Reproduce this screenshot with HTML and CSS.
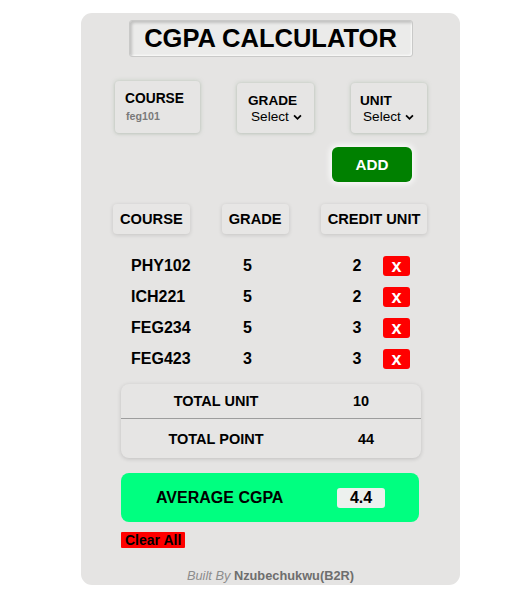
FILE: index.html
```html
<!DOCTYPE html>
<html>
<head>
<meta charset="utf-8">
<link rel="stylesheet" href="styles.css">
</head>
<body>
<div class="card">
  <div class="title-wrap"><h1 class="title">CGPA CALCULATOR</h1></div>

  <div class="inputs">
    <div class="field field-course">
      <span class="field-label">COURSE</span>
      <span class="field-input">feg101</span>
    </div>
    <div class="field field-grade">
      <span class="field-label small">GRADE</span>
      <span class="field-select">Select <svg class="chev" viewBox="0 0 10 7" width="9" height="7"><path d="M1.2 1.2 L5 5 L8.8 1.2" fill="none" stroke="#000" stroke-width="2"/></svg></span>
    </div>
    <div class="field field-unit">
      <span class="field-label small">UNIT</span>
      <span class="field-select">Select <svg class="chev" viewBox="0 0 10 7" width="9" height="7"><path d="M1.2 1.2 L5 5 L8.8 1.2" fill="none" stroke="#000" stroke-width="2"/></svg></span>
    </div>
  </div>

  <div class="add-row"><button class="add-btn">ADD</button></div>

  <div class="heads">
    <div class="head">COURSE</div>
    <div class="head">GRADE</div>
    <div class="head">CREDIT UNIT</div>
  </div>

  <div class="rows">
    <div class="row"><span class="c-course">PHY102</span><span class="c-grade">5</span><span class="c-unit">2</span><button class="x-btn">x</button></div>
    <div class="row"><span class="c-course">ICH221</span><span class="c-grade">5</span><span class="c-unit">2</span><button class="x-btn">x</button></div>
    <div class="row"><span class="c-course">FEG234</span><span class="c-grade">5</span><span class="c-unit">3</span><button class="x-btn">x</button></div>
    <div class="row"><span class="c-course">FEG423</span><span class="c-grade">3</span><span class="c-unit">3</span><button class="x-btn">x</button></div>
  </div>

  <div class="totals">
    <div class="t-row t-first"><span class="t-label">TOTAL UNIT</span><span class="t-val">10</span></div>
    <div class="t-row"><span class="t-label">TOTAL POINT</span><span class="t-val t-val2">44</span></div>
  </div>

  <div class="average">
    <span class="avg-label">AVERAGE CGPA</span>
    <span class="avg-val">4.4</span>
  </div>

  <div class="clear-row"><button class="clear-btn">Clear All</button></div>

  <div class="footer"><em>Built By</em> <strong>Nzubechukwu(B2R)</strong></div>
</div>
</body>
</html>
```

FILE: styles.css
```css
* { box-sizing: border-box; }
html, body { margin: 0; padding: 0; background: #fff; }
body {
  font-family: "Liberation Sans", Arial, sans-serif;
  color: #000;
}
button { font-family: inherit; border: none; cursor: pointer; padding: 0; }

.card {
  margin: 13px 0 0 81px;
  width: 379px;
  height: 572px;
  background: #e5e4e3;
  border-radius: 11px;
  padding-top: 7px;
}

.title-wrap { display: flex; justify-content: center; }
.title {
  margin: 0;
  width: 284px;
  height: 37px;
  font-size: 25.5px;
  font-weight: bold;
  line-height: 35px;
  text-align: center;
  background: #ebebea;
  border: 1px solid #c9c9c8;
  border-radius: 3px;
  box-shadow: inset 2px 2px 3px rgba(0,0,0,0.18), inset -1px -1px 2px rgba(255,255,255,0.8);
}

.inputs {
  display: flex;
  justify-content: space-between;
  align-items: flex-end;
  padding: 0 33px 0 34px;
  margin-top: 24px;
}
.field {
  display: flex;
  flex-direction: column;
  background: #e6e5e4;
  border-radius: 4px;
  box-shadow: 0 0 4px rgba(150,175,150,0.5), 0 1px 3px rgba(0,0,0,0.08);
}
.field-course { width: 85px; height: 52px; padding: 10px 0 0 10px; }
.field-grade { width: 77px; height: 50px; padding: 10px 0 0 11px; }
.field-unit { width: 76px; height: 50px; padding: 10px 0 0 9px; }
.field-label { font-size: 13.8px; font-weight: bold; line-height: 16px; }
.field-label.small { font-size: 13.6px; }
.field-input { font-size: 10.7px; font-weight: bold; color: #7a7a7a; margin-top: 3px; padding-left: 1px; line-height: 12px; }
.field-select { font-size: 13.6px; line-height: 16px; padding-left: 3px; display: flex; align-items: center; gap: 4px; white-space: nowrap; }
.chev { display: block; margin-top: 1px; }

.add-row { display: flex; justify-content: flex-end; padding-right: 48px; margin-top: 14px; }
.add-btn {
  width: 80px; height: 35px;
  background: #008000;
  color: #fff;
  font-size: 15.2px;
  font-weight: bold;
  border-radius: 6px;
  box-shadow: 0 0 6px 2px rgba(255,255,255,0.9);
}

.heads { display: flex; gap: 32px; padding-left: 32px; margin-top: 22px; }
.head {
  height: 30px;
  padding: 0 7px;
  font-size: 14.67px;
  font-weight: bold;
  line-height: 30px;
  background: #e7e6e5;
  border-radius: 4px;
  box-shadow: 0 1px 4px rgba(0,0,0,0.14);
  white-space: nowrap;
}

.rows { margin-top: 16px; padding-left: 50px; }
.row {
  display: grid;
  grid-template-columns: 112px 108px 12px 47px;
  height: 31px;
  align-items: center;
  font-size: 16px;
  font-weight: bold;
}
.c-unit { text-align: center; }
.x-btn {
  margin-left: 20px;
  width: 27px; height: 20px;
  background: #ff0000;
  color: #fff;
  font-size: 18px;
  font-weight: bold;
  line-height: 18px;
  border-radius: 3px;
}

.totals {
  margin: 10px 39px 0 40px;
  height: 74px;
  border-radius: 8px;
  background: #e6e5e4;
  box-shadow: 0 1px 4px rgba(0,0,0,0.16);
  display: flex;
  flex-direction: column;
}
.t-row {
  display: grid;
  grid-template-columns: 190px 1fr;
  align-items: center;
  font-size: 14.5px;
  font-weight: bold;
  text-align: center;
  flex: 1;
}
.t-first { flex: 0 0 35px; border-bottom: 1px solid #9d9d9d; }
.t-val { padding-right: 10px; }
.t-val2 { padding-right: 0; }

.average {
  margin: 15px 41px 0 40px;
  height: 49px;
  background: #00ff80;
  border-radius: 8px;
  display: flex;
  align-items: center;
  padding-left: 35px;
}
.avg-label { font-size: 16px; font-weight: bold; width: 181px; }
.avg-val {
  width: 48px; height: 20px;
  background: #edf1ee;
  border-radius: 3px;
  font-size: 16px;
  font-weight: bold;
  text-align: center;
  line-height: 20px;
}

.clear-row { margin: 9px 0 0 40px; }
.clear-btn {
  height: 16px;
  padding: 0 4px;
  background: #ff0000;
  color: #000;
  font-size: 14px;
  font-weight: bold;
  line-height: 16px;
  border-radius: 1px;
}

.footer {
  margin-top: 19px;
  text-align: center;
  font-size: 12.8px;
  line-height: 15px;
  color: #8a8a8a;
}
.footer em { font-style: italic; color: #8d8d8d; }
.footer strong { color: #6e6e6e; }
```
